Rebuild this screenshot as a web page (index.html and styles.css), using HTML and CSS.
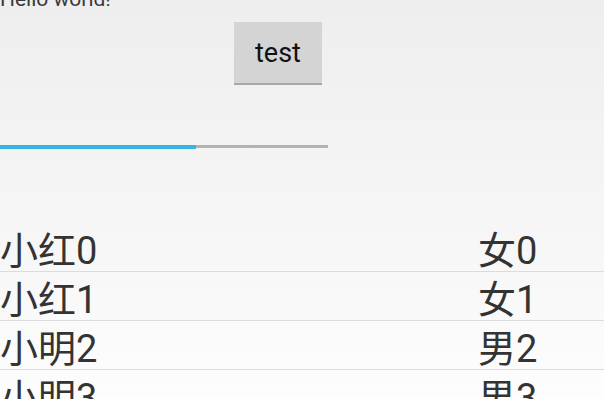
FILE: index.html
```html
<!DOCTYPE html>
<html lang="zh-CN">
<head>
    <meta charset="UTF-8">
    <meta name="viewport" content="width=device-width, initial-scale=1.0">
    <title>Hello world</title>
    <link rel="stylesheet" href="styles.css">
</head>
<body>
    <div class="screen">
        <p class="hello">Hello world!</p>
        <div class="btn-row">
            <button class="test-btn">test</button>
        </div>
        <div class="progress">
            <div class="progress-fill" style="width: 196px"></div>
        </div>
        <ul class="people">
            <li class="person"><span class="name">小红0</span><span class="sex">女0</span></li>
            <li class="person"><span class="name">小红1</span><span class="sex">女1</span></li>
            <li class="person"><span class="name">小明2</span><span class="sex">男2</span></li>
            <li class="person"><span class="name">小明3</span><span class="sex">男3</span></li>
        </ul>
    </div>
</body>
</html>
```

FILE: styles.css
```css
html, body {
    margin: 0;
    background: #ffffff;
}
.screen {
    height: 399px;
    overflow: hidden;
    background: linear-gradient(#eeeeee, #f6f6f6 230px, #fdfdfd);
    font-family: Roboto, "Noto Sans CJK SC", sans-serif;
    color: #333333;
}
.hello {
    margin: -15px 0 0 0;
    font-size: 21px;
    line-height: 28px;
    color: #3a3a3a;
}
.btn-row {
    padding: 9px 0 0 234px;
}
.test-btn {
    width: 88px;
    height: 63px;
    border: none;
    border-bottom: 2px solid #a8a8a8;
    background: #d4d4d4;
    font-family: Roboto, sans-serif;
    font-size: 27px;
    color: #111111;
    padding: 0;
}
.progress {
    margin-top: 60px;
    width: 328px;
    height: 3px;
    background: #b3b3b3;
    display: flex;
    align-items: center;
}
.progress-fill {
    height: 4px;
    background: #33b5e5;
}
.people {
    list-style: none;
    margin: 75px 0 0 0;
    padding: 0;
}
.person {
    display: flex;
    height: 48px;
    align-items: center;
    border-bottom: 1px solid #dcdcdc;
    font-size: 38px;
}
.name {
    width: 478px;
}
```
